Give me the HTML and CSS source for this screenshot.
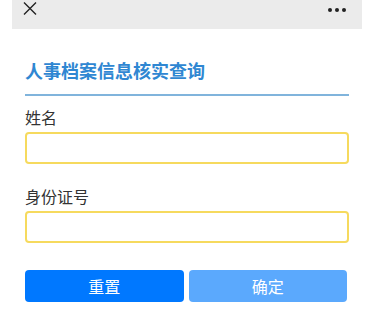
FILE: index.html
```html
<!DOCTYPE html>
<html lang="zh-CN">
<head>
  <meta charset="UTF-8" />
  <meta name="viewport" content="width=device-width, initial-scale=1.0" />
  <title>人事档案信息核实查询</title>
  <link rel="stylesheet" href="styles.css">
</head>
<body>
  <div class="topbar">
    <svg class="close" width="14" height="13" viewBox="0 0 14 13">
      <path d="M1 0.5 L13 12.5 M13 0.5 L1 12.5" stroke="#222" stroke-width="1.4" fill="none" />
    </svg>
    <div class="more"><span></span><span></span><span></span></div>
  </div>

  <div class="content">
    <h1 class="title">人事档案信息核实查询</h1>

    <form class="form">
      <label class="label" for="name">姓名</label>
      <input class="field" id="name" type="text" />

      <label class="label" for="idcard">身份证号</label>
      <input class="field" id="idcard" type="text" />

      <div class="actions">
        <button type="reset" class="btn btn-reset">重置</button>
        <button type="button" class="btn btn-ok">确定</button>
      </div>
    </form>
  </div>
</body>
</html>
```

FILE: styles.css
```css
* {
  margin: 0;
  padding: 0;
  box-sizing: border-box;
}

body {
  background: #fff;
  font-family: "Noto Sans CJK SC", "Noto Sans", sans-serif;
  color: #333;
}

.topbar {
  margin: 0 19px 0 12px;
  height: 29px;
  background: #ebebeb;
  display: flex;
  align-items: flex-start;
  justify-content: space-between;
  padding: 2px 16px 0 11px;
}

.close {
  display: block;
}

.more {
  display: flex;
  gap: 3px;
  margin-top: 6px;
}

.more span {
  width: 4px;
  height: 4px;
  border-radius: 50%;
  background: #222;
}

.content {
  padding: 0 32px 0 25px;
}

.title {
  margin-top: 29px;
  font-size: 18px;
  line-height: 24px;
  font-weight: bold;
  color: #2f87d2;
  padding-bottom: 12px;
  border-bottom: 2px solid #80b4dc;
}

.form {
  display: flex;
  flex-direction: column;
}

.label {
  font-size: 16px;
  line-height: 22px;
  color: #333;
  margin-top: 10px;
  margin-bottom: 4px;
}

.field {
  height: 32px;
  border: 2px solid #f6da5e;
  border-radius: 4px;
  background: #fff;
  outline: none;
  margin-bottom: 11px;
  font-size: 15px;
  padding: 0 8px;
}

.actions {
  display: flex;
  gap: 5px;
  margin-top: 16px;
  padding-right: 2px;
}

.btn {
  flex: 1;
  height: 32px;
  border: none;
  border-radius: 4px;
  color: #fff;
  font-family: inherit;
  font-size: 16px;
}

.btn-reset {
  background: #0078ff;
}

.btn-ok {
  background: #5ba9fd;
}
```
